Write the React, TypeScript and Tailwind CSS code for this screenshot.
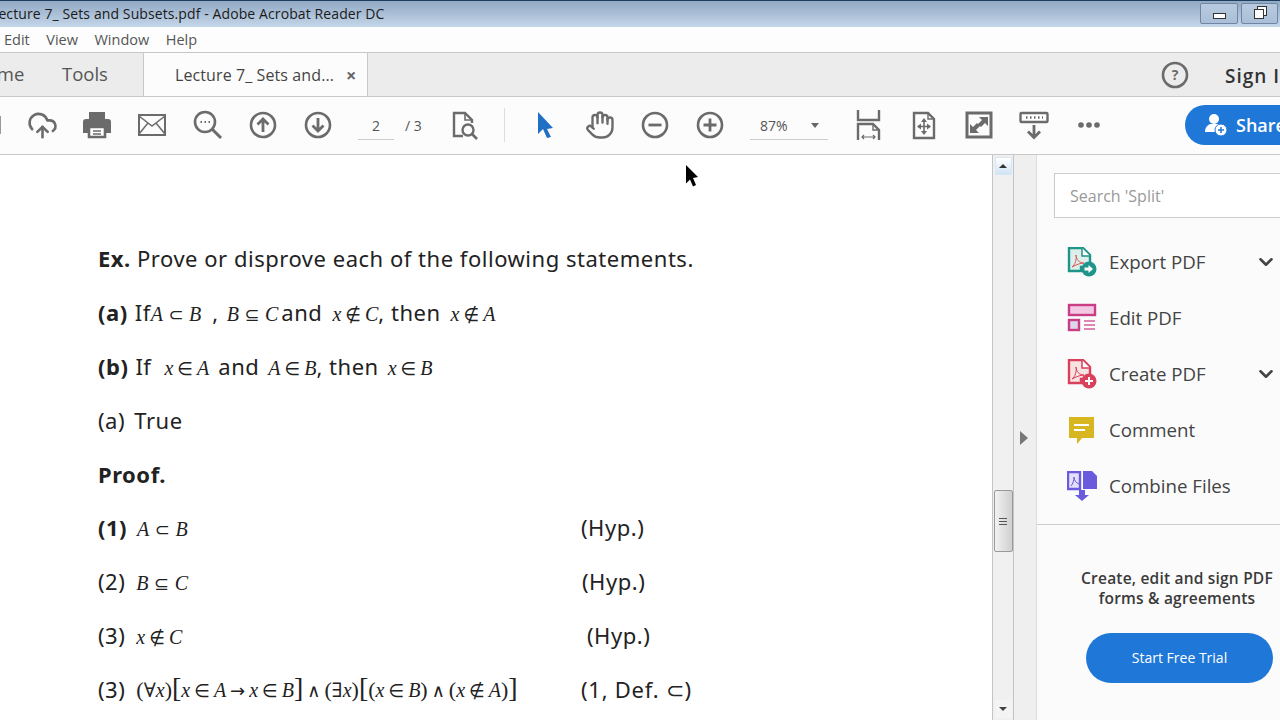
import { ReactNode } from "react";
import { ChevronDown, CloudUpload, Hand } from "lucide-react";

const ui = "font-['Open_Sans','Noto_Sans',sans-serif]";

function Gray({ children, w = 30 }: { children: ReactNode; w?: number }) {
  return (
    <svg width={w} height={30} viewBox={`0 0 ${w} 30`} fill="none" stroke="#6b6b6b" strokeWidth="2.4" className="shrink-0">
      {children}
    </svg>
  );
}

function CircleIcon({ children }: { children: ReactNode }) {
  return (
    <Gray>
      <circle cx="15" cy="15" r="12" strokeWidth="2.6" />
      {children}
    </Gray>
  );
}

function Printer() {
  return (
    <Gray>
      <path d="M7 2h16v8H7z" fill="#6b6b6b" stroke="none" />
      <path d="M4 9h22a3 3 0 0 1 3 3v11h-6v-5H7v5H1V12a3 3 0 0 1 3-3z" fill="#6b6b6b" stroke="none" />
      <path d="M7 17h16v10H7z" fill="#fff" stroke="#6b6b6b" strokeWidth="2.6" />
      <path d="M11 21h8M11 24h8" strokeWidth="1.5" />
    </Gray>
  );
}

function MailIcon() {
  return (
    <Gray>
      <rect x="2" y="5" width="26" height="20" strokeWidth="2" />
      <path d="M2 6l13 10L28 6M2 24l9-11M28 24l-9-11" strokeWidth="1.5" />
    </Gray>
  );
}

function FindIcon() {
  return (
    <Gray>
      <circle cx="12" cy="12" r="10" strokeWidth="2.6" />
      <path d="M19 19l9 9" strokeWidth="3" />
      <path d="M7.500 12h1.500M11.500 12h1.500M15.500 12h1.500" strokeWidth="1.8" />
    </Gray>
  );
}

function PageSearch() {
  return (
    <Gray>
      <path d="M13 26H4V3h11l7 7v3" strokeWidth="2.4" />
      <path d="M15 3v7h7" strokeWidth="1.6" />
      <circle cx="18" cy="20" r="5.500" strokeWidth="2.400" />
      <path d="M22 24l5 5" strokeWidth="2.600" />
    </Gray>
  );
}

function FitWidth() {
  return (
    <Gray>
      <path d="M5 0v10h21V0" strokeWidth="2.4" />
      <path d="M5 30V14h15l6 6v10" strokeWidth="2.4" />
      <path d="M20 14v6h6" strokeWidth="1.4" />
      <path d="M9 27h13M11 25l-2 2 2 2M20 25l2 2-2 2" strokeWidth="1.2" />
    </Gray>
  );
}

function FitPage() {
  return (
    <Gray>
      <path d="M5 28V3h14l6 6v19z" strokeWidth="2.4" />
      <path d="M19 3v6h6" strokeWidth="1.4" />
      <path d="M15 10v13M9 16.500h12" strokeWidth="1.6" />
      <path d="M15 8l-3 4h6zM15 25l-3-4h6zM8 16.500l4-3v6zM22 16.500l-4-3v6z" fill="#6b6b6b" stroke="none" />
    </Gray>
  );
}

function FullScreen() {
  return (
    <Gray>
      <rect x="3" y="3" width="24" height="24" strokeWidth="3" />
      <path d="M15 7h9v9l-3-3-4 4-3-3 4-4zM15 23H6v-9l3 3 4-4 3 3-4 4z" fill="#6b6b6b" stroke="none" />
    </Gray>
  );
}

function ReadMode() {
  return (
    <Gray>
      <rect x="1.500" y="3" width="27" height="9" rx="1" fill="#fff" strokeWidth="2.400" />
      <path d="M7 7.500h1.500M11 7.500h1.500M15 7.500h1.500M19 7.500h1.500M23 7.500h1" strokeWidth="2.400" />
      <path d="M15 15v12M9 21.500l6 6 6-6" strokeWidth="2.800" />
    </Gray>
  );
}

function Squiggle({ color }: { color: string }) {
  return <path d="M5 20c3-2 5-8 4-12 0 4 3 8 8 8-4 0-8 2-12 4z" fill="none" stroke={color} strokeWidth="1" />;
}

function ExportIcon() {
  return (
    <svg width="30" height="30" viewBox="0 0 30 30">
      <path d="M2 1h14l7 7v12H14v4H2z" fill="#dcefeb" stroke="#1f9488" strokeWidth="2.4" />
      <path d="M15 1v8h8" fill="#fff" stroke="#1f9488" strokeWidth="1.5" />
      <Squiggle color="#d85a5a" />
      <circle cx="22" cy="22" r="7.500" fill="#1f9488" />
      <path d="M17.500 20.500h4v-2.500l4.500 4-4.500 4v-2.500h-4z" fill="#fff" />
    </svg>
  );
}

function EditIcon() {
  return (
    <svg width="30" height="30" viewBox="0 0 30 30">
      <rect x="2" y="2" width="26" height="10" fill="#f3c8e3" stroke="#c93d86" strokeWidth="2.4" />
      <rect x="2" y="17" width="10" height="10" fill="#ddd5e8" stroke="#c93d86" strokeWidth="2.4" />
      <path d="M17 18h11M17 22h11M17 26h11" stroke="#d3609f" strokeWidth="1.500" />
    </svg>
  );
}

function CreateIcon() {
  return (
    <svg width="30" height="30" viewBox="0 0 30 30">
      <path d="M2 1h14l7 7v12h-9v4H2z" fill="#f8e3e3" stroke="#d9405b" strokeWidth="2.4" />
      <path d="M15 1v8h8" fill="#fff" stroke="#d9405b" strokeWidth="1.5" />
      <Squiggle color="#d9405b" />
      <circle cx="22" cy="22" r="7.500" fill="#d9405b" />
      <path d="M22 18v8M18 22h8" stroke="#fff" strokeWidth="2" />
    </svg>
  );
}

function CommentIcon() {
  return (
    <svg width="30" height="30" viewBox="0 0 30 30">
      <path d="M2 2h25v21H15l-5 6v-6H2z" fill="#d8b61f" />
      <path d="M7 10h15M7 15h11" stroke="#fff" strokeWidth="2" />
    </svg>
  );
}

function CombineIcon() {
  return (
    <svg width="30" height="30" viewBox="0 0 30 30">
      <path d="M1 1h12v17H1z" fill="#e4e0fb" stroke="#6a5add" strokeWidth="2.4" />
      <path d="M16 0h9l5 5v13H16z" fill="#6a5add" />
      <path d="M4 15c2-2 3-6 3-9 0 3 2 6 5 7" fill="none" stroke="#6a5add" strokeWidth="1" />
      <path d="M12 19h6v5h4l-7 6-7-6h4z" fill="#6a5add" />
    </svg>
  );
}

function ShareIcon() {
  return (
    <svg width="24" height="24" viewBox="0 0 24 24">
      <circle cx="10" cy="6" r="5" fill="#fff" />
      <path d="M1 19c0-5 3-7 5-8h8c2 1 4 2 4 4v4z" fill="#fff" />
      <circle cx="17" cy="17" r="6" fill="#fff" stroke="#1f78d8" strokeWidth="1" />
      <path d="M17 14v6M14 17h6" stroke="#1f78d8" strokeWidth="1.5" />
    </svg>
  );
}

// toolbar slot, centred on the icon grid
function Slot({ w, children }: { w: number; children: ReactNode }) {
  return (
    <div className="flex items-center justify-center shrink-0" style={{ width: w }}>
      {children}
    </div>
  );
}

function M({ children, className = "" }: { children: ReactNode; className?: string }) {
  return (
    <span className={`font-['Liberation_Serif','DejaVu_Serif',serif] text-[20px] tracking-normal italic mt-[4px] ${className}`}>
      {children}
    </span>
  );
}

function Sym({ children, wide = false }: { children: ReactNode; wide?: boolean }) {
  return (
    <span className={`font-['DejaVu_Sans',sans-serif] text-[18px] not-italic ${wide ? "mx-[5.5px]" : "mx-[4px]"}`}>
      {children}
    </span>
  );
}

function Paren({ children, big = false }: { children: ReactNode; big?: boolean }) {
  return <span className={`not-italic ${big ? "text-[28px]" : "text-[22px]"}`}>{children}</span>;
}

function Line({ children, why, whyClass = "" }: { children: ReactNode; why?: string; whyClass?: string }) {
  return (
    <div className="flex items-center h-[53.9px] whitespace-pre">
      <div className={why ? "w-[483px] shrink-0 flex items-center" : "flex items-center"}>{children}</div>
      {why && <span className={whyClass}>{why}</span>}
    </div>
  );
}

const tools = [
  { name: "Export PDF", icon: <ExportIcon />, more: true },
  { name: "Edit PDF", icon: <EditIcon /> },
  { name: "Create PDF", icon: <CreateIcon />, more: true },
  { name: "Comment", icon: <CommentIcon /> },
  { name: "Combine Files", icon: <CombineIcon /> },
];

export default function App() {
  return (
    <div className={`w-screen h-screen overflow-hidden flex flex-col relative bg-white ${ui}`}>
      {/* title bar */}
      <div className="h-[27px] shrink-0 border-t border-t-[#1c3c60] bg-gradient-to-b from-[#92a9c4] to-[#c4d6e9] flex items-center justify-between overflow-hidden">
        <span className="ml-[-9px] mb-[2px] text-[14px] tracking-[0.1px] text-[#1a1a1a] whitespace-nowrap">
          Lecture 7_ Sets and Subsets.pdf - Adobe Acrobat Reader DC
        </span>
        <div className="flex gap-[3px] mr-[2px] mb-[2px]">
          <div className="w-[38px] h-[21px] border border-[#6f87a3] rounded-[2px] bg-gradient-to-b from-[#b8cadf] to-[#aabfd7] flex items-end justify-center pb-[4px]">
            <div className="w-[13px] h-[6px] border border-[#333] bg-white" />
          </div>
          <div className="w-[37px] h-[21px] border border-[#6f87a3] rounded-[2px] bg-gradient-to-b from-[#b8cadf] to-[#aabfd7] flex items-center justify-center">
            <div className="w-[10px] h-[10px] border border-[#333] bg-white mt-[2px] mr-[2px] shadow-[3px_-3px_0_-1px_#fff,3px_-3px_0_0_#333]" />
          </div>
        </div>
      </div>

      {/* menu */}
      <div className="h-[25px] shrink-0 bg-[#fdfdfd] flex items-center text-[14.5px] text-[#555] pl-[4px] gap-[16.5px]">
        <span>Edit</span>
        <span>View</span>
        <span>Window</span>
        <span>Help</span>
      </div>

      {/* tabs */}
      <div className="h-[45px] shrink-0 bg-[#ececec] border-y border-[#c8c8c8] flex items-stretch overflow-hidden">
        <span className="self-center ml-[-28px] mb-[1px] text-[18.5px] text-[#555] w-[90px] shrink-0">Home</span>
        <span className="self-center mb-[1px] text-[18.5px] text-[#555] w-[81px] shrink-0">Tools</span>
        <div className="w-[225px] shrink-0 mb-[-1px] bg-[#fcfcfc] border-x border-[#c8c8c8] flex items-center pl-[31px]">
          <span className="text-[16px] tracking-[0.1px] text-[#444] w-[171px] whitespace-nowrap">Lecture 7_ Sets and...</span>
          <span className="text-[18px] font-bold text-[#666] leading-none">×</span>
        </div>
        <div className="flex-1 flex items-center justify-end">
          <svg width="28" height="28" viewBox="0 0 28 28" className="mr-[36px]">
            <circle cx="14" cy="14" r="12" fill="none" stroke="#6b6b6b" strokeWidth="2.600" />
            <text x="14" y="19" textAnchor="middle" fontSize="14" fontWeight="700" fill="#6b6b6b">?</text>
          </svg>
          <span className="mt-[3px] text-[19px] font-semibold tracking-[1px] text-[#333] w-[55px] whitespace-nowrap overflow-hidden">Sign In</span>
        </div>
      </div>

      {/* toolbar */}
      <div className="h-[58px] shrink-0 bg-[#fcfcfc] border-b border-[#c8c8c8] flex items-center pb-[1px] overflow-hidden">
        <div className="w-[1px] shrink-0 h-[18px] bg-[#999]" />
        <Slot w={83}><CloudUpload size={31} color="#6b6b6b" strokeWidth={2} /></Slot>
        <Slot w={25}><Printer /></Slot>
        <Slot w={86}><MailIcon /></Slot>
        <Slot w={26}><FindIcon /></Slot>
        <Slot w={83}><CircleIcon><path d="M15 22V9M9.500 14.500L15 9l5.500 5.500" strokeWidth="2.800" /></CircleIcon></Slot>
        <Slot w={27}><CircleIcon><path d="M15 8v13M9.500 15.500L15 21l5.500-5.500" strokeWidth="2.800" /></CircleIcon></Slot>
        <div className="w-[93px] shrink-0 flex items-center text-[14px] text-[#555] ml-[27px]">
          <span className="w-[36px] text-center border-b border-[#ccc] leading-[26px] mt-[2px]">2</span>
          <span className="ml-[11px]">/ 3</span>
        </div>
        <Slot w={28}><PageSearch /></Slot>
        <div className="w-[1px] shrink-0 h-[34px] bg-[#ddd] ml-[25px]" />
        <div className="ml-[25px]">
          <svg width="30" height="30" viewBox="0 0 30 30">
            <path d="M8 2l15 16-6 1 4 8-4 1-4-9-5 5z" fill="#1f6fc4" />
          </svg>
        </div>
        <div className="ml-[25px]"><Hand size={30} color="#6b6b6b" strokeWidth={1.900} /></div>
        <div className="ml-[25px]"><CircleIcon><path d="M8.500 15h13" strokeWidth="2.800" /></CircleIcon></div>
        <div className="ml-[25px]"><CircleIcon><path d="M8.500 15h13M15 8.500v13" strokeWidth="2.800" /></CircleIcon></div>
        <div className="ml-[25px] w-[78px] shrink-0 border-b border-[#ccc] flex items-center text-[14px] text-[#555] leading-[26px] mt-[2px] pl-[10px]">
          <span>87%</span>
          <span className="ml-[23px] w-0 h-0 border-x-[4px] border-x-transparent border-t-[5px] border-t-[#666]" />
        </div>
        <div className="ml-[25px]"><FitWidth /></div>
        <div className="ml-[26px]"><FitPage /></div>
        <div className="ml-[25px]"><FullScreen /></div>
        <div className="ml-[25px]"><ReadMode /></div>
        <div className="ml-[25px]">
          <svg width="30" height="30" viewBox="0 0 30 30" fill="#6b6b6b">
            <circle cx="7" cy="15" r="2.800" />
            <circle cx="15" cy="15" r="2.800" />
            <circle cx="23" cy="15" r="2.800" />
          </svg>
        </div>
        <div className="ml-[81px] h-[40px] w-[140px] shrink-0 rounded-l-full bg-[#1f78d8] flex items-center pl-[19px] gap-[8px] text-white text-[18px] font-semibold">
          <ShareIcon />
          <span>Share</span>
        </div>
      </div>

      <div className="flex-1 flex min-h-0">
        {/* page */}
        <div className="w-[992px] shrink-0 bg-white pt-[76px] pl-[98px] text-[22px] tracking-[0.52px] leading-none text-[#222] font-['Noto_Sans',sans-serif] overflow-hidden">
          <Line><b>Ex. </b><span>Prove or disprove each of the following statements.</span></Line>
          <Line>
            <b className="mr-[7px]">(a)</b>If
            <M>A<Sym wide>⊂</Sym>B</M>
            <span className="ml-[11px]">,</span>
            <M className="ml-[8px]">B<Sym wide>⊆</Sym>C</M>
            <span className="ml-[3px]">and</span>
            <M className="ml-[10px]">x<Sym>∉</Sym>C</M>, then
            <M className="ml-[10px]">x<Sym>∉</Sym>A</M>
          </Line>
          <Line>
            <b className="mr-[7px]">(b)</b>If
            <M className="ml-[13px]">x<Sym>∈</Sym>A</M>
            <span className="ml-[9px]">and</span>
            <M className="ml-[9px]">A<Sym>∈</Sym>B</M>, then
            <M className="ml-[9px]">x<Sym>∈</Sym>B</M>
          </Line>
          <Line><span className="mr-[3px]">(a)</span> True</Line>
          <Line><b>Proof.</b></Line>
          <Line why="(Hyp.)"><b className="mr-[10px]">(1)</b><M>A<Sym wide>⊂</Sym>B</M></Line>
          <Line why="(Hyp.)" whyClass="ml-[1px]"><span className="mr-[11px]">(2)</span><M>B<Sym wide>⊆</Sym>C</M></Line>
          <Line why="(Hyp.)" whyClass="ml-[6px]"><span className="mr-[11px]">(3)</span><M>x<Sym>∉</Sym>C</M></Line>
          <Line why="(1, Def. ⊂)" whyClass="tracking-[0.75px]">
            <span className="mr-[11px]">(3)</span>
            <span className="font-['Liberation_Serif','DejaVu_Serif',serif] text-[20px] tracking-normal italic mb-[2px]">
              <Paren>(</Paren>∀x<Paren>)</Paren>
              <Paren big>[</Paren>x<Sym>∈</Sym>A<Sym>→</Sym>x<Sym>∈</Sym>B<Paren big>]</Paren>
              <Sym>∧</Sym><Paren>(</Paren>∃x<Paren>)</Paren>
              <Paren big>[</Paren><Paren>(</Paren>x<Sym>∈</Sym>B<Paren>)</Paren>
              <Sym>∧</Sym><Paren>(</Paren>x<Sym>∉</Sym>A<Paren>)</Paren><Paren big>]</Paren>
            </span>
          </Line>
        </div>

        {/* scrollbar */}
        <div className="w-[22px] shrink-0 bg-[#f0f0f0] border-x border-[#c4c4c4] flex flex-col items-center justify-between py-[2px]">
          <div className="w-[17px] h-[18px] border border-[#d8e6f2] bg-gradient-to-b from-white to-[#cfe4f5] flex items-center justify-center">
            <span className="w-0 h-0 border-x-[4px] border-x-transparent border-b-[4px] border-b-[#333]" />
          </div>
          <div className="w-[19px] h-[62px] mt-[315px] border border-[#9a9a9a] rounded-[2px] bg-gradient-to-r from-[#f2f2f2] to-[#cfcfcf] flex flex-col items-center justify-center gap-[2px]">
            <span className="w-[8px] h-[1px] bg-[#555]" />
            <span className="w-[8px] h-[1px] bg-[#555]" />
            <span className="w-[8px] h-[1px] bg-[#555]" />
          </div>
          <div className="w-[17px] h-[18px] mt-auto bg-[#f4f4f4] flex items-center justify-center">
            <span className="w-0 h-0 border-x-[4px] border-x-transparent border-t-[4px] border-t-[#444]" />
          </div>
        </div>

        {/* splitter */}
        <div className="w-[23px] shrink-0 bg-[#efefef] border-r border-[#ddd] flex items-center justify-center pr-[2px]">
          <span className="w-0 h-0 border-y-[7px] border-y-transparent border-l-[8px] border-l-[#777]" />
        </div>

        {/* tools pane */}
        <div className="flex-1 bg-[#fbfbfb] flex flex-col min-w-0 overflow-hidden">
          <div className="ml-[17px] mt-[18px] w-[300px] shrink-0 h-[45px] border border-[#ccc] bg-white flex items-center pl-[15px] text-[16px] text-[#999]">
            Search 'Split'
          </div>
          <div className="mt-[16px] flex flex-col">
            {tools.map((t) => (
              <div key={t.name} className="h-[56.1px] flex items-center pl-[30px] text-[18.7px] text-[#444]">
                <span className="w-[42px] shrink-0 flex">{t.icon}</span>
                <span className="w-[157px] shrink-0 whitespace-nowrap">{t.name}</span>
                {t.more && <ChevronDown size={22} color="#444" strokeWidth={2.800} className="ml-[-11px]" />}
              </div>
            ))}
          </div>
          <div className="border-t border-[#ccc] mt-[10px] flex flex-col w-[284px]">
            <p className="mt-[43px] w-[280px] text-center text-[15.5px] tracking-[0.2px] leading-[20px] font-semibold text-[#3a3a3a] whitespace-nowrap">
              Create, edit and sign PDF
              <br />
              forms &amp; agreements
            </p>
            <button className="mt-[25px] ml-[49px] w-[187px] h-[50px] rounded-full bg-[#1f78d8] text-white text-[14px] pb-[2px]">
              Start Free Trial
            </button>
          </div>
        </div>
      </div>

      {/* mouse pointer */}
      <svg width="14" height="22" viewBox="0 0 14 22" className="absolute left-[685px] top-[165px]">
        <path d="M1 0l12 12-5 1 3 7-3 1.500-3-7-4 4z" fill="#000" />
      </svg>
    </div>
  );
}
